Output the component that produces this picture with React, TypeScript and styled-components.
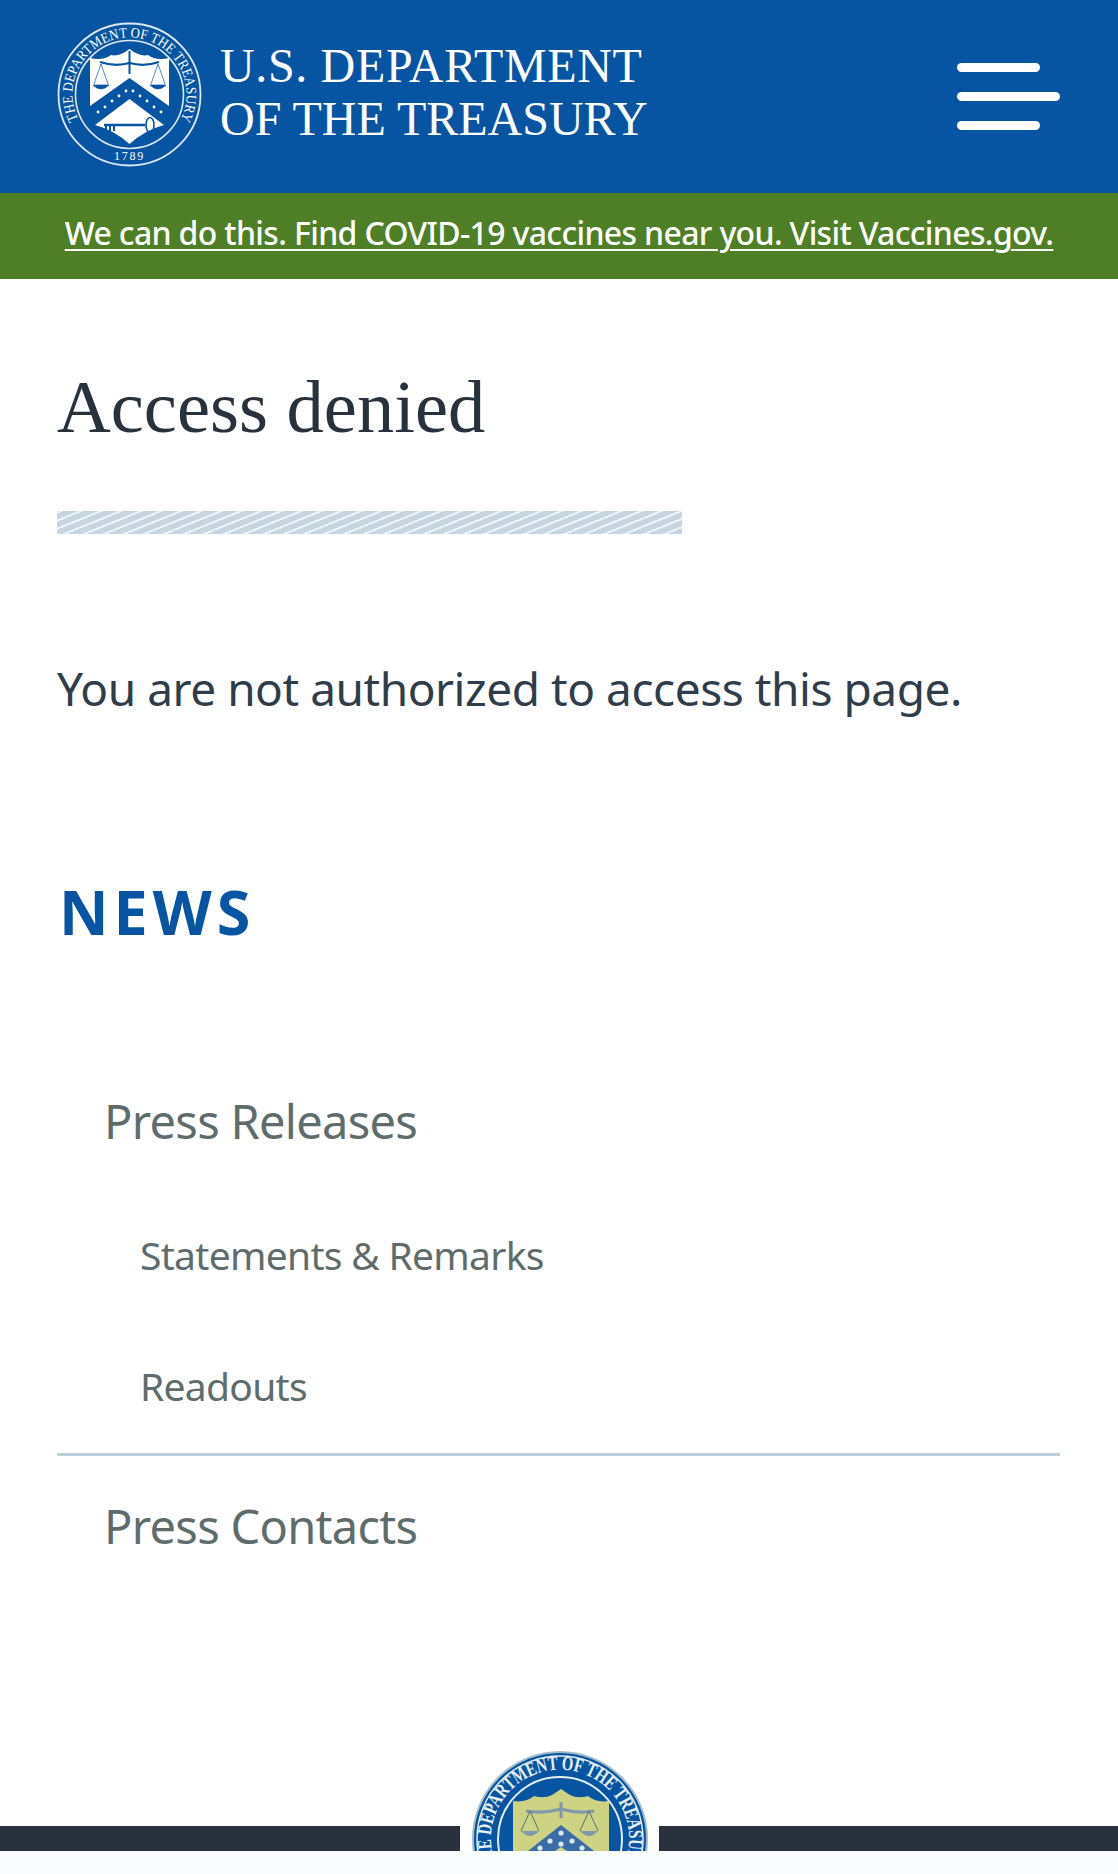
import React from "react";
import styled, { createGlobalStyle } from "styled-components";

const Global = createGlobalStyle`
  html, body { margin: 0; padding: 0; background: #fff; }
  body { font-family: "Noto Sans", "Open Sans", sans-serif; width: 1118px; height: 1874px; overflow: hidden; }
`;

const Page = styled.div`
  width: 1118px;
  height: 1874px;
  display: flex;
  flex-direction: column;
  overflow: hidden;
`;

const Header = styled.header`
  height: 193px;
  background: #0654a2;
  display: flex;
  align-items: center;
  justify-content: space-between;
  padding: 0 58px 0 57px;
`;

const Brand = styled.div`
  display: flex;
  align-items: center;
  gap: 18px;
  padding-bottom: 5px;
`;

const Wordmark = styled.div`
  font-family: "Liberation Serif", serif;
  font-size: 48px;
  line-height: 53px;
  color: #fff;
  white-space: nowrap;
  margin-top: -5px;
`;

const WordLine = styled.div<{ $spacing: number }>`
  letter-spacing: ${(p) => p.$spacing}px;
`;

const Burger = styled.button`
  width: 103px;
  display: flex;
  flex-direction: column;
  gap: 20px;
  padding: 0;
  border: 0;
  background: none;
  align-items: flex-start;
`;

const BurgerBar = styled.span<{ $w: number }>`
  display: block;
  height: 9px;
  border-radius: 5px;
  background: #fff;
  width: ${(p) => p.$w}px;
`;

const Banner = styled.div`
  height: 86px;
  box-sizing: border-box;
  padding-bottom: 7px;
  background: #4e7e25;
  display: flex;
  align-items: center;
  justify-content: center;
`;

const BannerLink = styled.a`
  color: #fff;
  font-size: 32px;
  font-weight: 500;
  letter-spacing: -0.66px;
  text-decoration: underline;
  text-decoration-thickness: 2px;
  text-underline-offset: 4px;
  white-space: nowrap;
`;

const Main = styled.main`
  flex: 1;
  padding: 0 58px 0 57px;
  display: flex;
  flex-direction: column;
`;

const Title = styled.h1`
  font-family: "Liberation Serif", serif;
  font-weight: 400;
  font-size: 74.5px;
  line-height: 80px;
  color: #28323c;
  margin: 88px 0 0;
`;

const Hatch = styled.div`
  width: 625px;
  height: 23px;
  margin-top: 64px;
  background: repeating-linear-gradient(-22deg, #c5d6e1 0 5.5px, #edf3f6 5.5px 7.5px);
`;

const Message = styled.p`
  font-size: 46px;
  line-height: 60px;
  letter-spacing: -0.45px;
  color: #2f3d4a;
  margin: 124px 0 0;
`;

const Section = styled.h2`
  font-size: 61px;
  line-height: 70px;
  font-weight: 700;
  letter-spacing: 5px;
  color: #0654a2;
  margin: 159px 0 0 2px;
`;

const NavList = styled.nav`
  display: flex;
  flex-direction: column;
  margin-top: 105px;
`;

const NavItem = styled.a<{ $sub?: boolean; $h: number }>`
  display: flex;
  align-items: center;
  height: ${(p) => p.$h}px;
  padding-left: ${(p) => (p.$sub ? 83 : 47)}px;
  font-size: ${(p) => (p.$sub ? 39 : 47)}px;
  letter-spacing: -0.7px;
  color: #5e6d6b;
  white-space: nowrap;
`;

const Divider = styled.hr`
  width: 100%;
  height: 3px;
  border: 0;
  margin: 2px 0 0;
  background: #b9ced9;
`;

const Footer = styled.footer`
  margin-top: auto;
  height: 48px;
  display: flex;
  align-items: flex-start;
  background: #fbfcfd;
`;

const FooterBar = styled.div`
  flex: 1;
  height: 25px;
  background: #28313c;
`;

const FooterSealSlot = styled.div`
  width: 199px;
  height: 25px;
  position: relative;
  background: #fff;
`;

const FooterSeal = styled.div`
  position: absolute;
  left: 12px;
  bottom: 0;
  width: 176px;
  height: 100px;
  overflow: hidden;
`;

function HeaderSeal() {
  return (
    <svg width="145" height="145" viewBox="0 0 145 145">
      <defs>
        <path id="sealArc" d="M21.3 97.5 A57 57 0 1 1 123.7 97.5" />
      </defs>
      <g fill="none" stroke="#dfe8f0">
        <circle cx="72.5" cy="72.5" r="71" strokeWidth="1.8" />
        <circle cx="72.5" cy="72.5" r="54" strokeWidth="1.6" />
      </g>
      <text fontFamily="Liberation Serif, serif" fontSize="14.5" fill="#fff">
        <textPath href="#sealArc" textLength="231" lengthAdjust="spacingAndGlyphs">THE DEPARTMENT OF THE TREASURY</textPath>
      </text>
      <text x="72.5" y="138" textAnchor="middle" fontFamily="Liberation Serif, serif" fontSize="12" fill="#fff" letterSpacing="1.8">1789</text>
      <path d="M33 36 Q46 39 54 33 Q62 35 72.5 27 Q83 35 91 33 Q99 39 112 36 L112 84 L72.5 56 L33 84 Z" fill="#fff" />
      <path d="M38 103 L72.5 77 L107 103 Q88 108 72.5 122 Q57 108 38 103 Z" fill="#fff" />
      <g fill="#fff">
        <circle cx="41" cy="90" r="1.4" /><circle cx="48" cy="85" r="1.4" /><circle cx="55" cy="79" r="1.4" />
        <circle cx="62" cy="74" r="1.4" /><circle cx="69" cy="69" r="1.4" /><circle cx="76" cy="69" r="1.4" />
        <circle cx="83" cy="74" r="1.4" /><circle cx="90" cy="79" r="1.4" /><circle cx="97" cy="85" r="1.4" />
        <circle cx="104" cy="90" r="1.4" />
      </g>
      <g stroke="#0654a2" fill="none">
        <path d="M43 40 Q58 45 72.5 41 Q87 45 102 40" strokeWidth="2.2" />
        <path d="M72.5 29 V52" strokeWidth="2" />
        <path d="M44 42 L37 62 M44 42 L51 62 M101 42 L94 62 M101 42 L108 62" strokeWidth="0.7" />
        <path d="M36 63 Q44 71 52 63 Z M93 63 Q101 71 109 63 Z" fill="#0654a2" strokeWidth="0.7" />
        <path d="M47 103 H88" strokeWidth="2.4" />
        <ellipse cx="93" cy="103" rx="4" ry="7.5" strokeWidth="1.6" />
        <path d="M49 104 V109 M53 104 V109 M57 104 V109" strokeWidth="2" />
      </g>
    </svg>
  );
}

function ColorSeal() {
  return (
    <svg width="176" height="176" viewBox="0 0 176 176">
      <defs>
        <path id="colorArc" d="M26 118 A69 69 0 1 1 150 118" />
      </defs>
      <circle cx="88" cy="88" r="87" fill="#0654a2" stroke="#a3bccb" strokeWidth="2" />
      <circle cx="88" cy="88" r="62" fill="none" stroke="#e4edf3" strokeWidth="2" />
      <circle cx="88" cy="88" r="83" fill="none" stroke="#e4edf3" strokeWidth="1.5" />
      <text fontFamily="Liberation Serif, serif" fontSize="20" fontWeight="700" fill="#e9f0f5">
        <textPath href="#colorArc" textLength="279" lengthAdjust="spacingAndGlyphs">THE DEPARTMENT OF THE TREASURY</textPath>
      </text>
      <path d="M41 50 Q54 52 62 45 Q72 48 80 44 L89 38 L98 44 Q106 48 116 45 Q124 52 137 50 L137 100 L41 100 Z" fill="#cdd383" />
      <path d="M89 74 L122 100 L56 100 Z" fill="#3a6da8" />
      <path d="M54 60 Q72 63 89 58 Q106 63 122 60" stroke="#7f99ab" strokeWidth="3" fill="none" />
      <path d="M89 51 V67" stroke="#7f99ab" strokeWidth="3" />
      <path d="M58 60 L49 80 M58 60 L67 80 M117 60 L108 80 M117 60 L126 80" stroke="#55707f" strokeWidth="1" />
      <path d="M49 80 Q58 90 67 80 Z M108 80 Q117 90 126 80 Z" fill="#7f99ab" />
      <g fill="#dfe7ee">
        <circle cx="89" cy="82" r="2.6" /><circle cx="78" cy="90" r="2.6" /><circle cx="100" cy="90" r="2.6" />
        <circle cx="68" cy="97" r="2.6" /><circle cx="110" cy="97" r="2.6" /><circle cx="89" cy="93" r="2.6" />
      </g>
      <path d="M83 100 L89 96 L95 100 Z" fill="#cdd383" />
    </svg>
  );
}

export default function App() {
  return (
    <Page>
      <Global />
      <Header>
        <Brand>
          <HeaderSeal />
          <Wordmark>
            <WordLine $spacing={0.65}>U.S. DEPARTMENT</WordLine>
            <WordLine $spacing={0}>OF THE TREASURY</WordLine>
          </Wordmark>
        </Brand>
        <Burger aria-label="Menu">
          <BurgerBar $w={83} />
          <BurgerBar $w={103} />
          <BurgerBar $w={83} />
        </Burger>
      </Header>
      <Banner>
        <BannerLink>We can do this. Find COVID-19 vaccines near you. Visit Vaccines.gov.</BannerLink>
      </Banner>
      <Main>
        <Title>Access denied</Title>
        <Hatch />
        <Message>You are not authorized to access this page.</Message>
        <Section>NEWS</Section>
        <NavList>
          <NavItem $h={137}>Press Releases</NavItem>
          <NavItem $sub $h={131}>Statements &amp; Remarks</NavItem>
          <NavItem $sub $h={131}>Readouts</NavItem>
          <Divider />
          <NavItem $h={140}>Press Contacts</NavItem>
        </NavList>
      </Main>
      <Footer>
        <FooterBar />
        <FooterSealSlot>
          <FooterSeal>
            <ColorSeal />
          </FooterSeal>
        </FooterSealSlot>
        <FooterBar />
      </Footer>
    </Page>
  );
}
